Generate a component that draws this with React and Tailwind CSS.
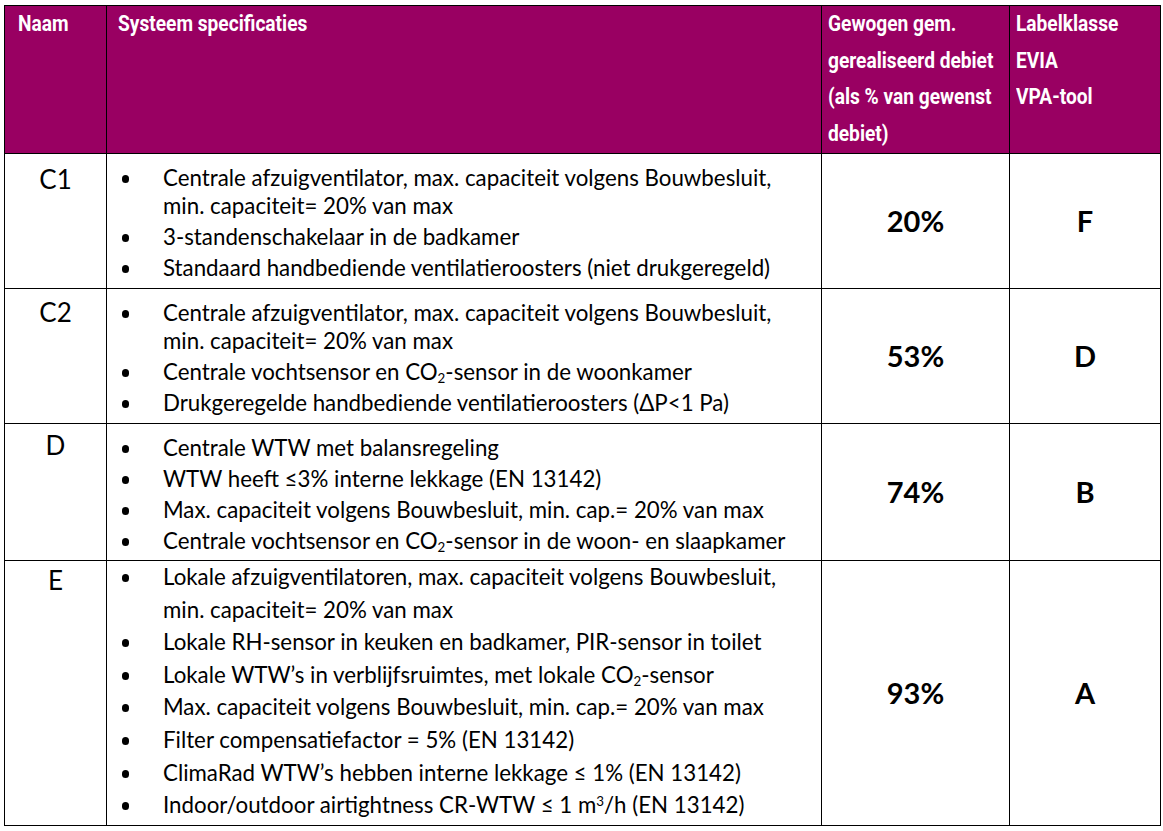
import React from 'react';

// --- TABLE DATA ---
const Sub = ({ children }) => <sub className="text-[0.6em] align-baseline relative top-[0.25em]">{children}</sub>;
const Sup = ({ children }) => <sup className="text-[0.6em] align-baseline relative -top-[0.5em]">{children}</sup>;

const rows = [
  {
    name: 'C1',
    pct: '20%',
    label: 'F',
    h: 'h-[135px]',
    namePt: 'pt-[9px]',
    listPt: 'pt-[10px]',
    leading: 'leading-[28px]',
    gap: 'gap-[3px]',
    items: [
      ['Centrale afzuigventilator, max. capaciteit volgens Bouwbesluit,', 'min. capaciteit= 20% van max'],
      ['3-standenschakelaar in de badkamer'],
      ['Standaard handbediende ventilatieroosters (niet drukgeregeld)'],
    ],
  },
  {
    name: 'C2',
    pct: '53%',
    label: 'D',
    h: 'h-[135px]',
    namePt: 'pt-[7px]',
    listPt: 'pt-[10px]',
    leading: 'leading-[28px]',
    gap: 'gap-[3px]',
    items: [
      ['Centrale afzuigventilator, max. capaciteit volgens Bouwbesluit,', 'min. capaciteit= 20% van max'],
      [<>Centrale vochtsensor en CO<Sub>2</Sub>-sensor in de woonkamer</>],
      ['Drukgeregelde handbediende ventilatieroosters (ΔP<1 Pa)'],
    ],
  },
  {
    name: 'D',
    pct: '74%',
    label: 'B',
    h: 'h-[137px]',
    namePt: 'pt-[5px]',
    listPt: 'pt-[10px]',
    leading: 'leading-[28px]',
    gap: 'gap-[3px]',
    items: [
      ['Centrale WTW met balansregeling'],
      ['WTW heeft ≤3% interne lekkage (EN 13142)'],
      ['Max. capaciteit volgens Bouwbesluit, min. cap.= 20% van max'],
      [<>Centrale vochtsensor en CO<Sub>2</Sub>-sensor in de woon- en slaapkamer</>],
    ],
  },
  {
    name: 'E',
    pct: '93%',
    label: 'A',
    h: 'h-[265px]',
    namePt: 'pt-[3px]',
    listPt: 'pt-0',
    leading: 'leading-[32.6px]',
    gap: 'gap-0',
    items: [
      ['Lokale afzuigventilatoren, max. capaciteit volgens Bouwbesluit,', 'min. capaciteit= 20% van max'],
      ['Lokale RH-sensor in keuken en badkamer, PIR-sensor in toilet'],
      [<>Lokale WTW’s in verblijfsruimtes, met lokale CO<Sub>2</Sub>-sensor</>],
      ['Max. capaciteit volgens Bouwbesluit, min. cap.= 20% van max'],
      ['Filter compensatiefactor = 5% (EN 13142)'],
      ['ClimaRad WTW’s hebben interne lekkage ≤ 1% (EN 13142)'],
      [<>Indoor/outdoor airtightness CR-WTW ≤ 1 m<Sup>3</Sup>/h (EN 13142)</>],
    ],
  },
];

// condensed heading look: Roboto bold squeezed horizontally
const HeadLines = ({ lines }) => (
  <span className="inline-block origin-left scale-x-[0.87] whitespace-nowrap">
    {lines.map((l, i) => (
      <span key={i} className="block">{l}</span>
    ))}
  </span>
);

const App = () => {
  return (
    <div className="w-[1163px] h-[831px] bg-white pt-[5px] pl-[4px] font-['Lato',sans-serif] text-black">
      <table className="border-collapse table-fixed w-[1156px]">
        <colgroup>
          <col className="w-[102px]" />
          <col className="w-[715px]" />
          <col className="w-[188px]" />
          <col className="w-[151px]" />
        </colgroup>
        <thead>
          {/* --- HEADER --- */}
          <tr className="h-[148px] bg-[#990062] text-white text-[22px] font-bold leading-[36.7px] font-['Roboto',sans-serif]">
            <th className="border border-black align-top text-left font-bold pl-[13px] pt-0">
              <HeadLines lines={['Naam']} />
            </th>
            <th className="border border-black align-top text-left font-bold pl-[11px] pt-0">
              <HeadLines lines={['Systeem specificaties']} />
            </th>
            <th className="border border-black align-top text-left font-bold pl-[6px] pt-0 overflow-visible">
              <HeadLines lines={['Gewogen gem.', 'gerealiseerd debiet', '(als % van gewenst', 'debiet)']} />
            </th>
            <th className="border border-black align-top text-left font-bold pl-[6px] pt-0">
              <HeadLines lines={['Labelklasse', 'EVIA', 'VPA-tool']} />
            </th>
          </tr>
        </thead>
        <tbody>
          {rows.map((row) => (
            <tr key={row.name} className={row.h}>
              <td className={`border border-black align-top text-center text-[26px] leading-[32px] ${row.namePt}`}>
                {row.name}
              </td>
              <td className={`border border-black align-top pl-[15px] ${row.listPt}`}>
                <ul className={`flex flex-col ${row.gap} text-[22.3px] ${row.leading}`}>
                  {row.items.map((lines, i) => (
                    <li key={i} className="flex">
                      <span className="w-[41px] shrink-0 flex items-start">
                        <span className={`block w-[7px] h-[8px] rounded-full bg-black ${row.name === 'E' ? 'mt-[13px]' : 'mt-[11px]'}`}></span>
                      </span>
                      <span className="whitespace-nowrap">
                        {lines.map((line, j) => (
                          <span key={j} className="block">{line}</span>
                        ))}
                      </span>
                    </li>
                  ))}
                </ul>
              </td>
              <td className="border border-black align-middle text-center text-[29px] font-bold">{row.pct}</td>
              <td className="border border-black align-middle text-center text-[29px] font-bold">{row.label}</td>
            </tr>
          ))}
        </tbody>
      </table>
    </div>
  );
};

export default App;
